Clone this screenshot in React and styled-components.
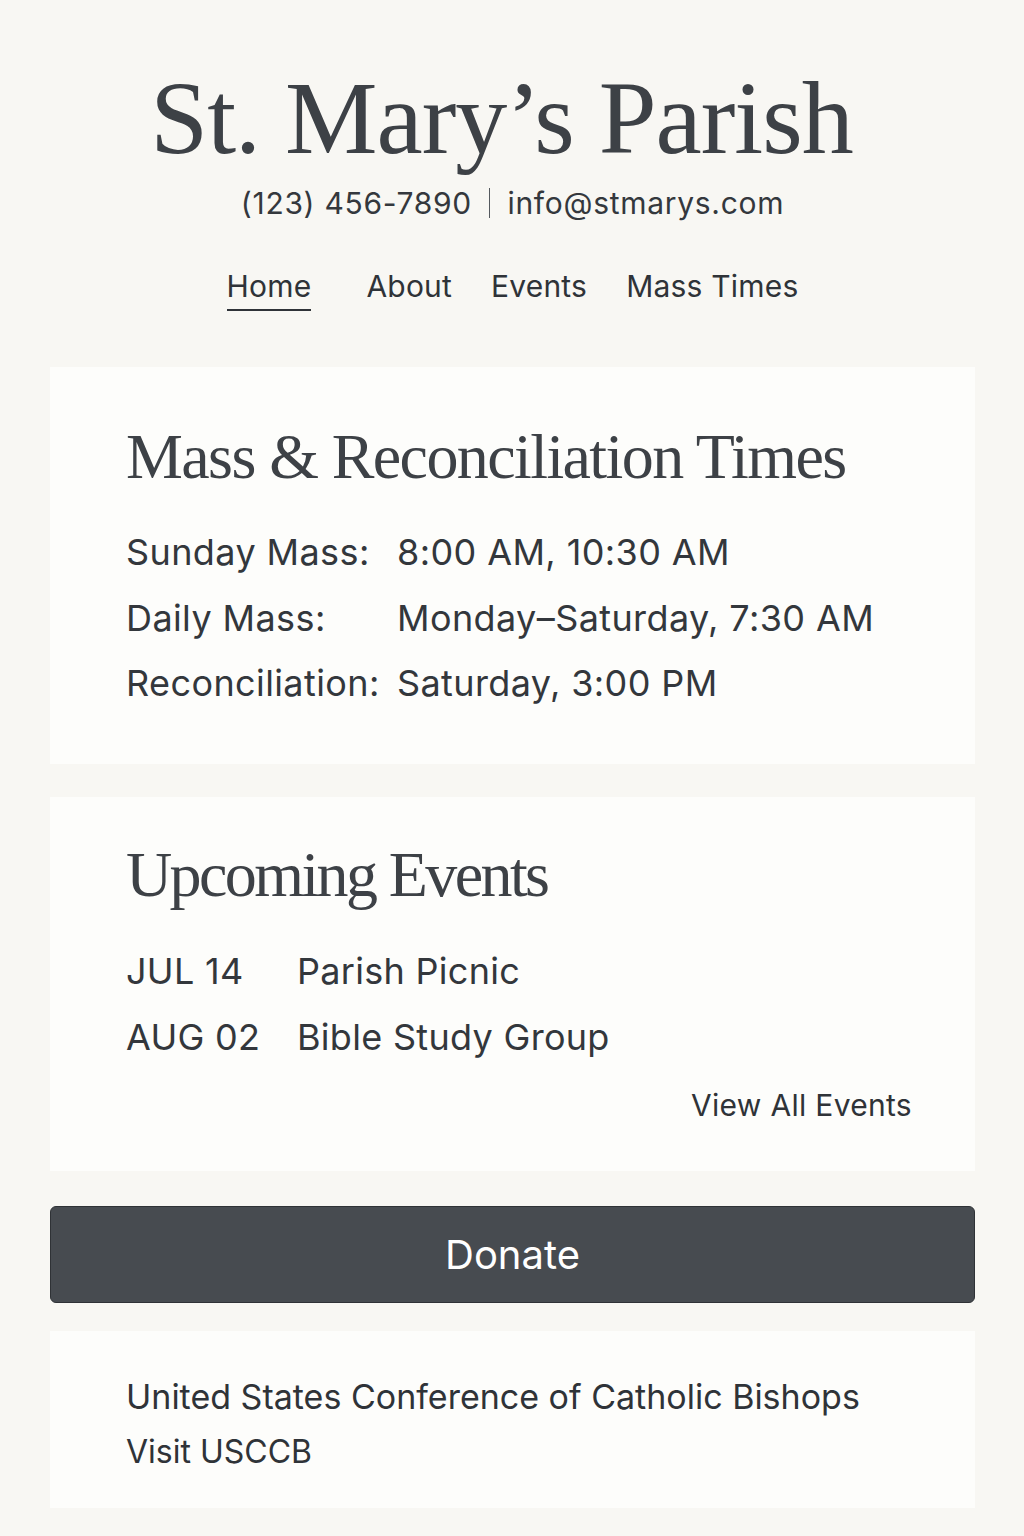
import React from "react";
import styled, { createGlobalStyle } from "styled-components";

const Global = createGlobalStyle`
  html, body { margin: 0; padding: 0; background: #f8f7f3; }
  body { font-family: "Inter", "Lato", "Liberation Sans", sans-serif; color: #3b3f44; }
  * { box-sizing: border-box; }
`;

const Page = styled.div`
  width: 1024px;
  min-height: 1536px;
  padding: 62px 49px 28px 50px;
  display: flex;
  flex-direction: column;
  align-items: stretch;
`;

const Header = styled.header`
  display: flex;
  flex-direction: column;
  align-items: center;
`;

const Title = styled.h1`
  margin: 0 22px 0 0;
  font-family: "Liberation Serif", "DejaVu Serif", serif;
  font-weight: 400;
  font-size: 104px;
  line-height: 112px;
  letter-spacing: -1px;
  color: #3d4146;
`;

const Contact = styled.div`
  margin-top: 9px;
  display: flex;
  align-items: center;
  gap: 17px;
  font-size: 30px;
  line-height: 40px;
  letter-spacing: 0.7px;
  color: #34383d;
`;

const Divider = styled.span`
  width: 1.5px;
  height: 30px;
  background: #55595e;
`;

const Nav = styled.nav`
  margin-top: 43px;
  display: flex;
  gap: 39px;
  align-items: flex-start;
`;

const NavLink = styled.a`
  font-size: 30px;
  line-height: 40px;
  letter-spacing: 0.2px;
  color: #2f3338;
  text-decoration: none;
  padding-bottom: 3px;
  border-bottom: 2px solid ${(p) => (p.$active ? "#2f3338" : "transparent")};
  margin-right: ${(p) => (p.$active ? "16px" : "0")};
`;

const Card = styled.section`
  background: #fdfdfb;
  padding: ${(p) => p.$pad || "60px 76px 56px"};
  margin-top: ${(p) => p.$mt || "0"};
`;

const CardTitle = styled.h2`
  margin: 0;
  font-family: "Liberation Serif", "DejaVu Serif", serif;
  font-weight: 400;
  font-size: 64px;
  line-height: 70px;
  letter-spacing: ${(p) => p.$track || "-1.6px"};
  color: #3d4146;
`;

const TimesGrid = styled.div`
  margin-top: 28px;
  display: grid;
  grid-template-columns: 271px auto;
  font-size: 36px;
  line-height: 65.5px;
  letter-spacing: 0.4px;
  color: #33373c;
`;

const EventsList = styled.div`
  margin-top: 28px;
  display: grid;
  grid-template-columns: 171px auto;
  font-size: 36px;
  line-height: 66px;
  letter-spacing: 0.3px;
  color: #33373c;
`;

const ViewAll = styled.a`
  align-self: flex-end;
  margin-top: 15px;
  margin-right: -13px;
  font-size: 30px;
  line-height: 40px;
  letter-spacing: 0.3px;
  color: #2f3338;
  text-decoration: none;
`;

const CardColumn = styled.div`
  display: flex;
  flex-direction: column;
`;

const DonateButton = styled.button`
  margin-top: 35px;
  height: 97px;
  width: 100%;
  background: #474b50;
  border: 1px solid #2f3236;
  border-radius: 6px;
  color: #ffffff;
  font-family: "Inter", "Lato", "Liberation Sans", sans-serif;
  font-size: 40px;
  cursor: pointer;
`;

const FooterText = styled.p`
  margin: 0;
  font-size: ${(p) => p.$size || "34px"};
  line-height: 55px;
  color: #2f3338;
`;

export default function App() {
  return (
    <>
      <Global />
      <Page>
        <Header>
          <Title>St. Mary’s Parish</Title>
          <Contact>
            <span>(123) 456-7890</span>
            <Divider />
            <span>info@stmarys.com</span>
          </Contact>
          <Nav>
            <NavLink $active href="#">Home</NavLink>
            <NavLink href="#">About</NavLink>
            <NavLink href="#">Events</NavLink>
            <NavLink href="#">Mass Times</NavLink>
          </Nav>
        </Header>

        <Card $mt="56px" $pad="55px 76px 47px">
          <CardTitle>Mass &amp; Reconciliation Times</CardTitle>
          <TimesGrid>
            <span>Sunday Mass:</span>
            <span>8:00 AM, 10:30 AM</span>
            <span>Daily Mass:</span>
            <span>Monday–Saturday, 7:30 AM</span>
            <span>Reconciliation:</span>
            <span>Saturday, 3:00 PM</span>
          </TimesGrid>
        </Card>

        <Card $mt="33px" $pad="43px 76px 46px">
          <CardColumn>
            <CardTitle $track="-2.6px">Upcoming Events</CardTitle>
            <EventsList>
              <span>JUL 14</span>
              <span>Parish Picnic</span>
              <span>AUG 02</span>
              <span>Bible Study Group</span>
            </EventsList>
            <ViewAll href="#">View All Events</ViewAll>
          </CardColumn>
        </Card>

        <DonateButton>Donate</DonateButton>

        <Card $mt="28px" $pad="38px 76px 29px">
          <FooterText>United States Conference of Catholic Bishops</FooterText>
          <FooterText $size="32px">Visit USCCB</FooterText>
        </Card>
      </Page>
    </>
  );
}
